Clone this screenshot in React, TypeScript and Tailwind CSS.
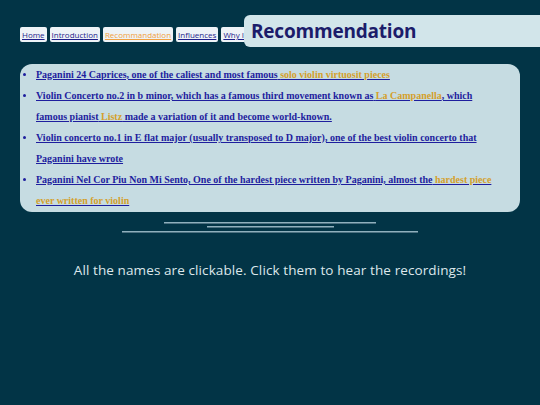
const navItems = [
  { label: "Home", active: false },
  { label: "Introduction", active: false },
  { label: "Recommandation", active: true },
  { label: "Influences", active: false },
  { label: "Why I", active: false },
];

const comic = "font-['Comic_Sans_MS','Open_Sans',sans-serif]";

const App = () => {
  return (
    <div className="min-h-[405px] w-full bg-[#023446] pt-[15px] font-['Liberation_Serif',serif]">
      <div className="flex items-start pl-[20px]">
        <nav className={`mt-[12px] flex gap-[3px] ${comic}`}>
          {navItems.map((item) => (
            <a
              key={item.label}
              href="#"
              className={`h-[15px] rounded-[2px] bg-[#eef3f7] px-[2px] text-[8px] leading-[15px] underline ${
                item.active ? "text-[#f0a040]" : "text-[#1e1e8c]"
              }`}
            >
              {item.label}
            </a>
          ))}
        </nav>
        <div className="relative z-10 -ml-[2px] flex h-[32px] flex-1 items-center rounded-l-[6px] bg-[#d2e5ea] pl-[7px]">
          <h1 className={`text-[19px] font-bold leading-none tracking-[-0.2px] text-[#1c1c6a] ${comic}`}>
            Recommendation
          </h1>
        </div>
      </div>

      <section className="mx-[20px] mt-[17px] rounded-[12px] bg-[#c6dce2] pb-[1px] pl-[16px] pr-[18px]">
        <ul className="list-disc text-[10px] font-bold leading-[21px] text-[#1e1e9e] marker:text-[#1e1e9e]">
          <li>
            <a href="#" className="underline">
              Paganini 24 Caprices, one of the caliest and most famous{" "}
              <span className="text-[#d4a02c]">solo violin virtuosit pieces</span>
            </a>
          </li>
          <li>
            <a href="#" className="underline">
              Violin Concerto no.2 in b minor, which has a famous third movement known as{" "}
              <span className="text-[#d4a02c]">La Campanella</span>, which famous pianist{" "}
              <span className="text-[#d4a02c]">Listz</span> made a variation of it and become world-known.
            </a>
          </li>
          <li>
            <a href="#" className="underline">
              Violin concerto no.1 in E flat major (usually transposed to D major), one of the best violin
              concerto that Paganini have wrote
            </a>
          </li>
          <li>
            <a href="#" className="underline">
              Paganini Nel Cor Piu Non Mi Sento, One of the hardest piece written by Paganini, almost the{" "}
              <span className="text-[#d4a02c]">hardest piece ever written for violin</span>
            </a>
          </li>
        </ul>
      </section>

      <div className="mt-[10px] flex flex-col items-center">
        <div className="h-[2px] w-[212px] border-t border-[#8fb0bd] bg-[#4d7282]" />
        <div className="mt-[2px] h-[2px] w-[127px] border-t border-[#8fb0bd] bg-[#4d7282]" />
        <div className="mt-[3px] h-[2px] w-[296px] border-t border-[#8fb0bd] bg-[#4d7282]" />
      </div>

      <p className={`mt-[27px] text-center text-[13.5px] tracking-[0.1px] text-[#dde7eb] ${comic}`}>
        All the names are clickable. Click them to hear the recordings!
      </p>
    </div>
  );
};

export default App;
